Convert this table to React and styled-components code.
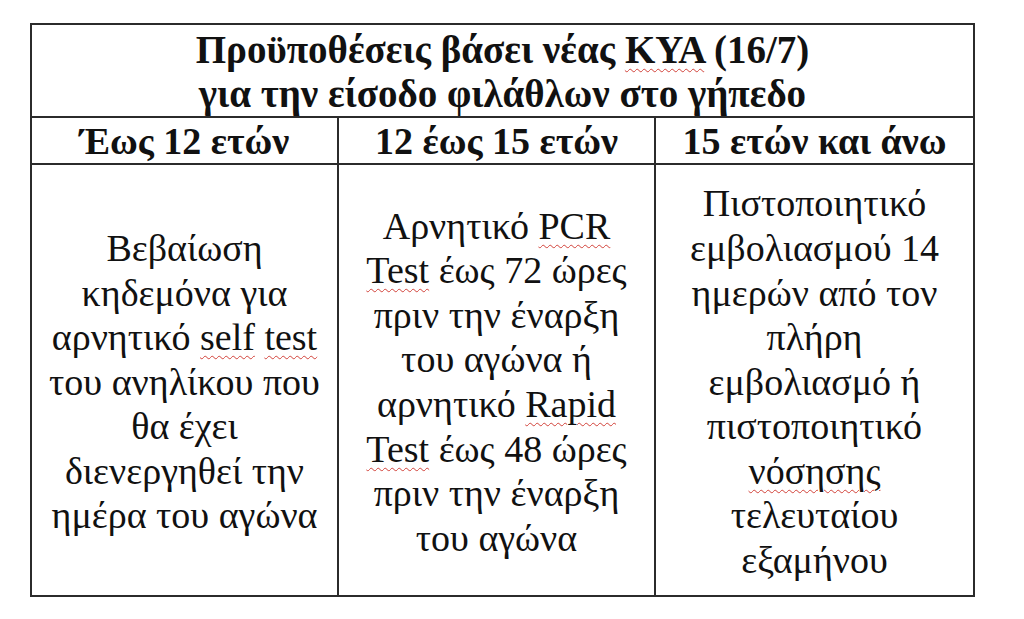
import React from 'react';
import styled, { createGlobalStyle } from 'styled-components';

const GlobalStyle = createGlobalStyle`
  html, body {
    margin: 0;
    padding: 0;
    background: #ffffff;
  }
  body {
    font-family: "Liberation Serif", "Times New Roman", serif;
    color: #111;
  }
`;

const Page = styled.div`
  width: 1024px;
  height: 619px;
  padding: 23px 0 0 30px;
  box-sizing: border-box;
`;

const Table = styled.table`
  width: 943px;
  border-collapse: collapse;
  table-layout: fixed;
`;

const Cell = styled.td`
  border: 2px solid #2b2b2b;
  padding: ${(p) => p.$pad || '0'};
  text-align: center;
  vertical-align: middle;
  height: ${(p) => p.$h}px;
  font-size: ${(p) => p.$fs || '38px'};
  font-weight: ${(p) => (p.$bold ? 700 : 400)};
  line-height: ${(p) => p.$lh || '44.6px'};
  color: #111;
  white-space: nowrap;
`;

const Spell = styled.span`
  text-decoration-line: underline;
  text-decoration-style: wavy;
  text-decoration-color: #d2423a;
  text-decoration-thickness: 1px;
  text-underline-offset: 5px;
`;

const lines = (arr) =>
  arr.map((l, i) => (
    <React.Fragment key={i}>
      {l}
      {i < arr.length - 1 && <br />}
    </React.Fragment>
  ));

const App = () => {
  return (
    <>
      <GlobalStyle />
      <Page>
        <Table>
          <colgroup>
            <col style={{ width: '307px' }} />
            <col style={{ width: '317px' }} />
            <col style={{ width: '319px' }} />
          </colgroup>
          <tbody>
            <tr>
              <Cell colSpan={3} $bold $fs="39px" $h={88} $lh="44px" $pad="3px 0 0 0">
                Προϋποθέσεις βάσει νέας <Spell>ΚΥΑ</Spell> (16/7)
                <br />
                για την είσοδο φιλάθλων στο γήπεδο
              </Cell>
            </tr>
            <tr>
              <Cell $bold $h={43} $lh="43px" $pad="2px 0 0 0">Έως 12 ετών</Cell>
              <Cell $bold $h={43} $lh="43px" $pad="2px 0 0 0">12 έως 15 ετών</Cell>
              <Cell $bold $h={43} $lh="43px" $pad="2px 0 0 0">15 ετών και άνω</Cell>
            </tr>
            <tr>
              <Cell $h={426} $pad="4px 0 0 0">
                {lines([
                  'Βεβαίωση',
                  'κηδεμόνα για',
                  <>αρνητικό <Spell>self</Spell> <Spell>test</Spell></>,
                  'του ανηλίκου που',
                  'θα έχει',
                  'διενεργηθεί την',
                  'ημέρα του αγώνα',
                ])}
              </Cell>
              <Cell $h={426} $pad="4px 0 0 0">
                {lines([
                  <>Αρνητικό <Spell>PCR</Spell></>,
                  <><Spell>Test</Spell> έως 72 ώρες</>,
                  'πριν την έναρξη',
                  'του αγώνα ή',
                  <>αρνητικό <Spell>Rapid</Spell></>,
                  <><Spell>Test</Spell> έως 48 ώρες</>,
                  'πριν την έναρξη',
                  'του αγώνα',
                ])}
              </Cell>
              <Cell $h={426} $pad="4px 0 0 0">
                {lines([
                  'Πιστοποιητικό',
                  'εμβολιασμού 14',
                  'ημερών από τον',
                  'πλήρη',
                  'εμβολιασμό ή',
                  'πιστοποιητικό',
                  <><Spell>νόσησης</Spell></>,
                  'τελευταίου',
                  'εξαμήνου',
                ])}
              </Cell>
            </tr>
          </tbody>
        </Table>
      </Page>
    </>
  );
};

export default App;
